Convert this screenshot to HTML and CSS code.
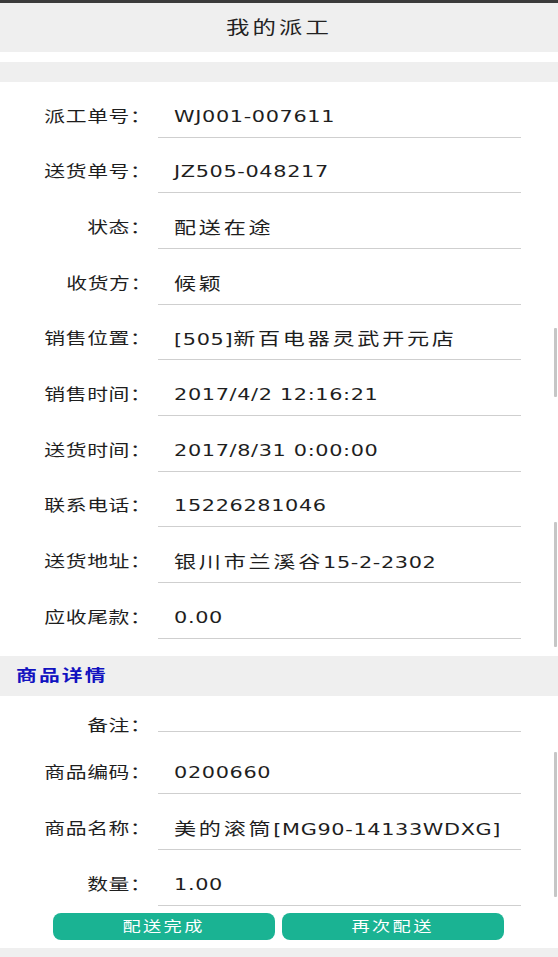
FILE: index.html
```html
<!DOCTYPE html>
<html lang="zh-CN">
<head>
<meta charset="utf-8">
<title>我的派工</title>
<link rel="stylesheet" href="styles.css">
</head>
<body>
<div class="page">
  <div class="statusbar"></div>
  <header class="topbar"><h1 class="title"><span class="t">我的派工</span></h1></header>
  <div class="spacer"></div>
  <div class="band"></div>

  <section class="form">
    <div class="row"><div class="label"><span class="t">派工单号：</span></div><div class="field"><span class="t">WJ001-007611</span></div></div>
    <div class="row"><div class="label"><span class="t">送货单号：</span></div><div class="field"><span class="t">JZ505-048217</span></div></div>
    <div class="row"><div class="label"><span class="t">状态：</span></div><div class="field"><span class="t"><span class="cjk">配送在途</span></span></div></div>
    <div class="row"><div class="label"><span class="t">收货方：</span></div><div class="field"><span class="t"><span class="cjk">候颖</span></span></div></div>
    <div class="row"><div class="label"><span class="t">销售位置：</span></div><div class="field"><span class="t">[505]<span class="cjk">新百电器灵武开元店</span></span></div></div>
    <div class="row"><div class="label"><span class="t">销售时间：</span></div><div class="field"><span class="t">2017/4/2 12:16:21</span></div></div>
    <div class="row"><div class="label"><span class="t">送货时间：</span></div><div class="field"><span class="t">2017/8/31 0:00:00</span></div></div>
    <div class="row"><div class="label"><span class="t">联系电话：</span></div><div class="field"><span class="t">15226281046</span></div></div>
    <div class="row"><div class="label"><span class="t">送货地址：</span></div><div class="field"><span class="t"><span class="cjk">银川市兰溪谷</span>15-2-2302</span></div></div>
    <div class="row"><div class="label"><span class="t">应收尾款：</span></div><div class="field"><span class="t">0.00</span></div></div>
  </section>

  <div class="section-head"><span class="t">商品详情</span></div>

  <section class="form form-goods">
    <div class="row row-note"><div class="label"><span class="t">备注：</span></div><div class="field field-empty"></div></div>
    <div class="row"><div class="label"><span class="t">商品编码：</span></div><div class="field"><span class="t">0200660</span></div></div>
    <div class="row"><div class="label"><span class="t">商品名称：</span></div><div class="field"><span class="t"><span class="cjk">美的滚筒</span>[MG90-14133WDXG]</span></div></div>
    <div class="row"><div class="label"><span class="t">数量：</span></div><div class="field"><span class="t">1.00</span></div></div>
  </section>

  <div class="actions">
    <button class="btn"><span class="t">配送完成</span></button>
    <button class="btn"><span class="t">再次配送</span></button>
  </div>
  <div class="footer-band"></div>

  <div class="scroll-ind ind-1"></div>
  <div class="scroll-ind ind-2"></div>
  <div class="scroll-ind ind-3"></div>
</div>
</body>
</html>
```
FILE: styles.css
```css
* { box-sizing: border-box; }
html, body { margin: 0; padding: 0; background: #fff; }
body {
  font-family: "DejaVu Sans", "Noto Sans CJK SC", sans-serif;
  color: #1e1e1e;
}
.page {
  position: relative;
  width: 558px;
  height: 957px;
  overflow: hidden;
  display: flex;
  flex-direction: column;
}
.t {
  display: inline-block;
  transform: scaleX(1.3);
  transform-origin: left center;
  white-space: nowrap;
}
.statusbar { height: 3px; background: #3b3b3b; flex: none; }
.topbar {
  height: 49px;
  background: #efefef;
  display: flex;
  align-items: center;
  flex: none;
  padding-left: 226px;
}
.title {
  margin: 0;
  font-size: 18px;
  font-weight: normal;
  letter-spacing: 2.4px;
  color: #222;
  line-height: 24px;
}
.spacer { height: 10px; flex: none; }
.band { height: 20px; background: #efefef; flex: none; }

.form { padding-bottom: 17px; flex: none; }
.form-goods { padding-bottom: 0; }
.row {
  height: 55.67px;
  display: flex;
  align-items: flex-end;
  padding-right: 37px;
}
.label {
  width: 152px;
  margin-right: 6px;
  height: 42px;
  line-height: 42px;
  text-align: right;
  font-family: "DejaVu Sans", "Noto Sans CJK TC", sans-serif;
  font-size: 16px;
  letter-spacing: 0.5px;
  white-space: nowrap;
}
.label .t { transform-origin: right center; }
.field {
  flex: 1;
  height: 42px;
  line-height: 42px;
  border-bottom: 1px solid #cfcfcf;
  padding-left: 16px;
  font-size: 16px;
  letter-spacing: 0.5px;
  white-space: nowrap;
}
.cjk { font-size: 17px; letter-spacing: 2.1px; }
.row-note {
  height: 43px;
  align-items: flex-start;
  padding-top: 18px;
}
.row-note .label { height: 24px; line-height: 24px; }
.row-note .field { height: 18px; }

.section-head {
  height: 40px;
  background: #efefef;
  color: #1212c0;
  font-size: 16px;
  font-weight: bold;
  letter-spacing: 1.6px;
  line-height: 40px;
  padding-left: 16px;
  flex: none;
}

.actions {
  display: flex;
  gap: 7px;
  padding-left: 53px;
  padding-top: 7px;
  height: 42px;
  flex: none;
}
.btn {
  width: 222px;
  height: 27px;
  border: none;
  border-radius: 8px;
  background: #1ab393;
  color: #fff;
  font-family: "DejaVu Sans", "Noto Sans CJK SC", sans-serif;
  font-size: 14px;
  letter-spacing: 1.8px;
  padding: 0;
  line-height: 27px;
  display: flex;
  justify-content: center;
  align-items: center;
}
.btn .t { transform-origin: center center; }
.footer-band { flex: 1; background: #efefef; }

.scroll-ind {
  position: absolute;
  right: 1px;
  width: 3px;
  background: #c6c6c6;
  border-radius: 1px;
}
.ind-1 { top: 328px; height: 69px; }
.ind-2 { top: 522px; height: 125px; }
.ind-3 { top: 752px; height: 145px; }
```
